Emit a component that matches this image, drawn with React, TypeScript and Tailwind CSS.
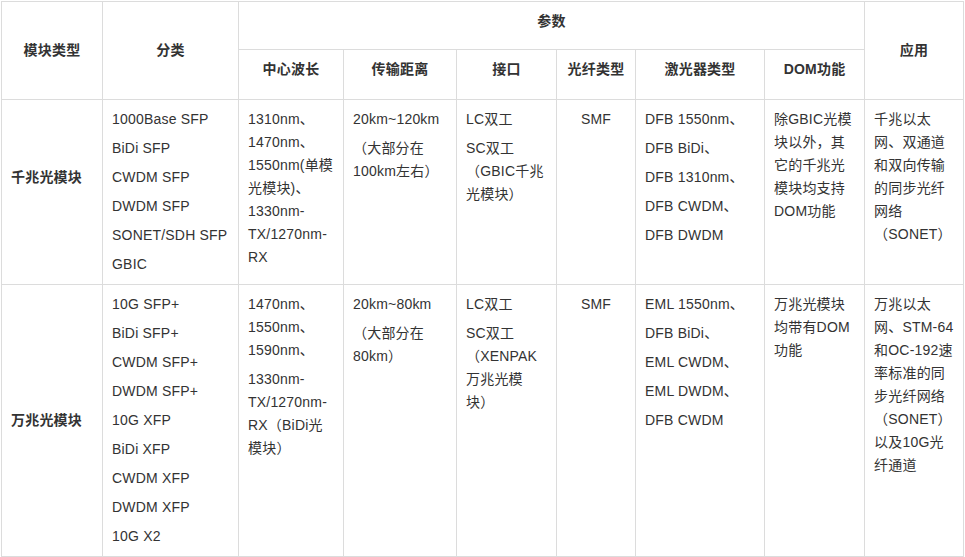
import React from "react";

type Para = string[];

const B = "border border-[#dcdcdc]";
const cellBody = `${B} align-top px-[9px] pt-[8px] pb-[8px] text-left`;

function Paras({ paras, center }: { paras: Para[]; center?: boolean }) {
  return (
    <div className={`flex flex-col gap-[6px] ${center ? "items-center text-center" : ""}`}>
      {paras.map((p, i) => (
        <p key={i} className="leading-[23px] m-0">
          {p.map((l, j) => (
            <React.Fragment key={j}>
              {j > 0 && <br />}
              {l}
            </React.Fragment>
          ))}
        </p>
      ))}
    </div>
  );
}

const rows = [
  {
    name: "千兆光模块",
    namePad: "pb-[37px]",
    cat: [["1000Base SFP"], ["BiDi SFP"], ["CWDM SFP"], ["DWDM SFP"], ["SONET/SDH SFP"], ["GBIC"]],
    wave: [["1310nm、", "1470nm、", "1550nm(单模", "光模块)、", "1330nm-", "TX/1270nm-", "RX"]],
    dist: [["20km~120km"], ["（大部分在", "100km左右）"]],
    iface: [["LC双工"], ["SC双工", "（GBIC千兆", "光模块）"]],
    fiber: [["SMF"]],
    laser: [["DFB 1550nm、"], ["DFB BiDi、"], ["DFB 1310nm、"], ["DFB CWDM、"], ["DFB DWDM"]],
    dom: [["除GBIC光模", "块以外，其", "它的千兆光", "模块均支持", "DOM功能"]],
    app: [["千兆以太", "网、双通道", "和双向传输", "的同步光纤", "网络", "（SONET）"]],
  },
  {
    name: "万兆光模块",
    namePad: "pb-[8px]",
    cat: [
      ["10G SFP+"],
      ["BiDi SFP+"],
      ["CWDM SFP+"],
      ["DWDM SFP+"],
      ["10G XFP"],
      ["BiDi XFP"],
      ["CWDM XFP"],
      ["DWDM XFP"],
      ["10G X2"],
    ],
    wave: [["1470nm、", "1550nm、", "1590nm、"], ["1330nm-", "TX/1270nm-", "RX（BiDi光", "模块）"]],
    dist: [["20km~80km"], ["（大部分在", "80km）"]],
    iface: [["LC双工"], ["SC双工", "（XENPAK", "万兆光模", "块）"]],
    fiber: [["SMF"]],
    laser: [["EML 1550nm、"], ["DFB BiDi、"], ["EML CWDM、"], ["EML DWDM、"], ["DFB CWDM"]],
    dom: [["万兆光模块", "均带有DOM", "功能"]],
    app: [["万兆以太", "网、STM-64", "和OC-192速", "率标准的同", "步光纤网络", "（SONET）", "以及10G光", "纤通道"]],
  },
];

export default function App() {
  return (
    <div
      className="w-[965px] h-[557px] bg-white text-[#333333] text-[14px] tracking-[0.2px] overflow-hidden pt-px pl-px"
      style={{ fontFamily: '"Liberation Sans", Arial, "Noto Sans CJK SC", sans-serif' }}
    >
      <table className="table-fixed border-collapse w-[962px]">
        <colgroup>
          <col className="w-[101px]" />
          <col className="w-[136px]" />
          <col className="w-[105px]" />
          <col className="w-[113px]" />
          <col className="w-[100px]" />
          <col className="w-[79px]" />
          <col className="w-[129px]" />
          <col className="w-[100px]" />
          <col className="w-[99px]" />
        </colgroup>
        <thead>
          <tr>
            <th rowSpan={2} className={`${B} align-middle font-bold text-center leading-[23px] px-[9px]`}>
              模块类型
            </th>
            <th rowSpan={2} className={`${B} align-middle font-bold text-center leading-[23px] px-[9px]`}>
              分类
            </th>
            <th colSpan={6} className={`${B} align-top font-bold text-center leading-[23px] px-[9px] pt-2 pb-4`}>
              参数
            </th>
            <th rowSpan={2} className={`${B} align-middle font-bold text-center leading-[23px] px-[9px]`}>
              应用
            </th>
          </tr>
          <tr>
            {["中心波长", "传输距离", "接口", "光纤类型", "激光器类型", "DOM功能"].map((h) => (
              <th
                key={h}
                className={`${B} align-top font-bold text-center leading-[23px] px-[9px] pt-2 pb-[18px]`}
              >
                {h}
              </th>
            ))}
          </tr>
        </thead>
        <tbody>
          {rows.map((r) => (
            <tr key={r.name}>
              <td className={`${B} align-middle text-left font-bold leading-[23px] px-[9px] pt-[8px] ${r.namePad}`}>
                {r.name}
              </td>
              <td className={cellBody}>
                <Paras paras={r.cat} />
              </td>
              <td className={cellBody}>
                <Paras paras={r.wave} />
              </td>
              <td className={cellBody}>
                <Paras paras={r.dist} />
              </td>
              <td className={cellBody}>
                <Paras paras={r.iface} />
              </td>
              <td className={cellBody}>
                <Paras paras={r.fiber} center />
              </td>
              <td className={cellBody}>
                <Paras paras={r.laser} />
              </td>
              <td className={cellBody}>
                <Paras paras={r.dom} />
              </td>
              <td className={cellBody}>
                <Paras paras={r.app} />
              </td>
            </tr>
          ))}
        </tbody>
      </table>
    </div>
  );
}
